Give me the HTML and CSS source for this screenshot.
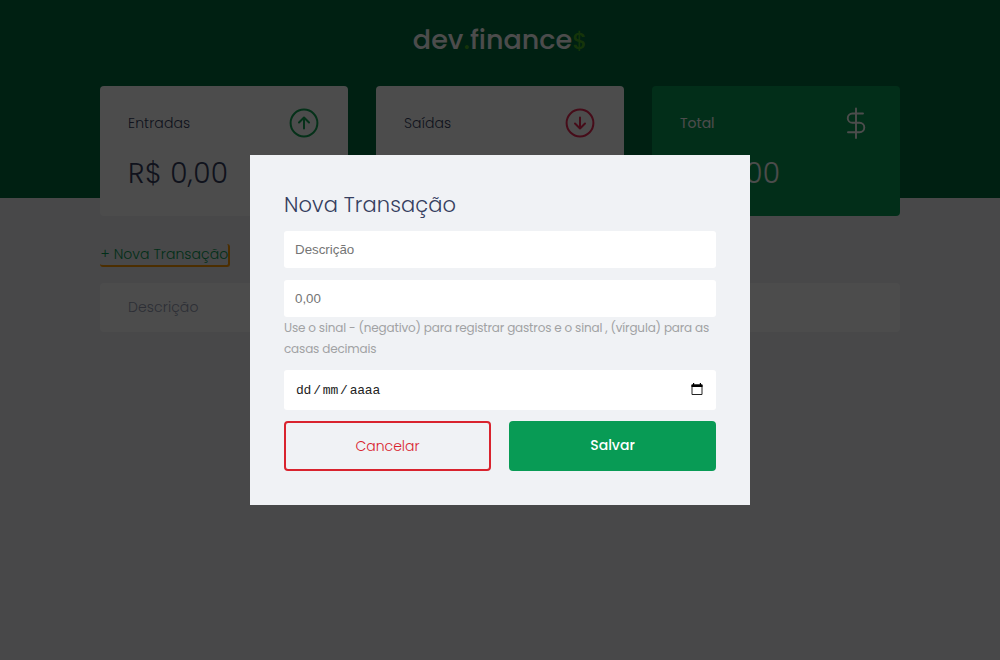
FILE: index.html
```html
<!DOCTYPE html>
<html lang="pt-br">
<head>
<meta charset="utf-8">
<title>dev.finance$</title>
<link rel="stylesheet" href="styles.css">
</head>
<body>
<header>
  <div class="logo"><span class="name">dev<i>.</i>finance</span><span class="money">$</span></div>
</header>
<main class="container">
  <section class="balance">
    <div class="card">
      <h3><span>Entradas</span>
        <svg width="32" height="32" viewBox="0 0 32 32" fill="none" stroke="#12a454" stroke-width="2" stroke-linecap="round" stroke-linejoin="round"><circle cx="16" cy="16" r="13.4"/><path d="M16 21.5V10.5M11 15.5l5-5 5 5"/></svg>
      </h3>
      <p>R$ 0,00</p>
    </div>
    <div class="card">
      <h3><span>Saídas</span>
        <svg width="32" height="32" viewBox="0 0 32 32" fill="none" stroke="#e92954" stroke-width="2" stroke-linecap="round" stroke-linejoin="round"><circle cx="16" cy="16" r="13.4"/><path d="M16 10.5V21.5M11 16.5l5 5 5-5"/></svg>
      </h3>
      <p>R$ 0,00</p>
    </div>
    <div class="card total">
      <h3><span>Total</span>
        <svg width="32" height="32" viewBox="0 0 32 32" fill="none" stroke="#fff" stroke-width="1.9" stroke-linecap="round"><path d="M16 1.5V31M23 6.5H12.4a4.6 4.6 0 0 0 0 9.3h7.2a4.7 4.7 0 0 1 0 9.4H8" /></svg>
      </h3>
      <p>R$ 0,00</p>
    </div>
  </section>
  <section class="transaction">
    <a class="new">+ Nova Transação</a>
    <div class="table-head"><span>Descrição</span></div>
  </section>
</main>
<div class="overlay">
  <div class="modal">
    <h2>Nova Transação</h2>
    <form>
      <input class="field" type="text" placeholder="Descrição">
      <div class="group">
        <input class="field" type="text" placeholder="0,00">
        <small>Use o sinal - (negativo) para registrar gastros e o sinal , (vírgula) para as<br>casas decimais</small>
      </div>
      <div class="field date">
        <span class="parts"><b>dd</b><b>/</b><b>mm</b><b>/</b><b>aaaa</b></span>
        <svg width="12" height="13" viewBox="0 0 12 13"><path d="M1 2h10v9.5H1z" fill="none" stroke="#222"/><path d="M.5 1.5h11V4H.5zM2 0h1.2v2H2zM8.8 0H10v2H8.8z"/></svg>
      </div>
      <div class="actions">
        <a class="button cancel">Cancelar</a>
        <button class="button save" type="button">Salvar</button>
      </div>
    </form>
  </div>
</div>
</body>
</html>
```

FILE: styles.css
```css
* { box-sizing: border-box; margin: 0; padding: 0; }
body {
  height: 660px;
  overflow: hidden;
  background: #f0f2f5;
  color: #363f5f;
  font-family: Poppins, Inter, "Open Sans", sans-serif;
  font-size: 14px;
  font-weight: 300;
}
header { height: 198px; padding-top: 21px; background: #006b3c; text-align: center; }
.logo { height: 38px; line-height: 38px; color: #fff; white-space: nowrap; }
.logo .name { font-size: 27px; font-weight: 500; }
.logo i { font-style: normal; color: #49b022; }
.logo .money { font-size: 23px; font-weight: 500; color: #49b022; }
.container { width: 800px; margin: -112px auto 0; }
.balance { display: grid; grid-template-columns: repeat(3, 1fr); gap: 28px; }
.card { height: 130px; padding: 21px 28px; border-radius: 4px; background: #fff; }
.card h3 { display: flex; align-items: center; justify-content: space-between; height: 32px; font-size: 14px; font-weight: 300; letter-spacing: .1px; }
.card p { margin-top: 14px; height: 42px; line-height: 42px; font-size: 28px; letter-spacing: .45px; white-space: nowrap; }
.total { background: #089b55; color: #fff; }
.total h3 { font-weight: 400; letter-spacing: 0; }
.transaction { margin-top: 28px; }
.new { display: block; height: 23px; width: 130px; padding-left: .5px; line-height: 20px; color: #069c54; letter-spacing: .06px; white-space: nowrap; border: solid #f90; border-width: 0 2px 2px 0; border-radius: 0 3px 3px 3px; }
.table-head { height: 49px; margin-top: 16px; padding: 0 28px; line-height: 49px; border-radius: 4px; background: #fff; color: #969cb3; letter-spacing: .1px; }
.overlay { position: fixed; inset: 0; display: flex; align-items: center; justify-content: center; background: rgba(0, 0, 0, .7); }
.modal { width: 500px; height: 350px; padding: 34px; background: #f0f2f5; }
.modal h2 { height: 32px; line-height: 32px; font-size: 21px; font-weight: 300; letter-spacing: .1px; }
form { margin-top: 10px; }
.field { display: block; width: 432px; height: 37px; padding: 0 11px; border: 0; border-radius: 3px; background: #fff; font: 13.333px "Liberation Sans", Arial, sans-serif; }
.field::placeholder { color: #757575; }
.group { margin-top: 12px; }
small { display: block; height: 42px; font-size: 12px; font-weight: 400; line-height: 21px; color: #a1a2a4; letter-spacing: -.17px; white-space: nowrap; }
.date { display: flex; align-items: center; justify-content: space-between; height: 40px; margin-top: 11px; padding: 0 13px 1px 11px; color: #222; font: 13px "Liberation Mono", "Courier New", monospace; letter-spacing: -.2px; }
.date b { font-weight: 400; padding: 0 1px; }
.parts { display: flex; padding-top: 1px; }
.actions { display: grid; grid-template-columns: 1fr 1fr; gap: 18px; margin-top: 11px; }
.button { display: flex; align-items: center; justify-content: center; height: 50px; border-radius: 4px; font-family: inherit; font-size: 14px; }
.cancel { border: 2px solid #d9232e; color: #d9232e; }
.save { padding-bottom: 2px; border: 0; background: #089b55; color: #fff; font-weight: 500; }
```
